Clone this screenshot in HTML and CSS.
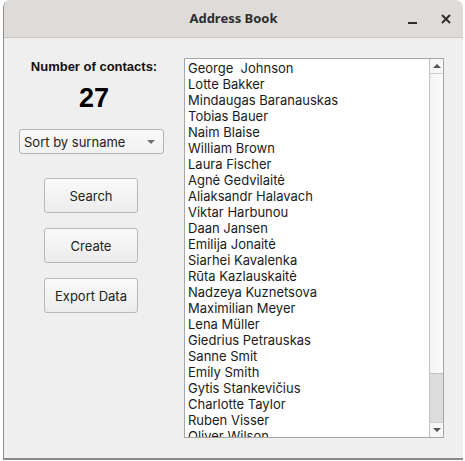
FILE: index.html
```html
<!DOCTYPE html>
<html>
<head>
<meta charset="utf-8">
<link rel="stylesheet" href="styles.css">
</head>
<body>
<div class="window">
  <div class="titlebar">
    <span class="title">Address Book</span>
    <div class="controls">
      <span class="min"></span>
      <svg class="close" width="10" height="10" viewBox="0 0 10 10"><path d="M1 1L9 9M9 1L1 9" stroke="#2e2e2e" stroke-width="2"/></svg>
    </div>
  </div>
  <div class="content">
    <div class="left">
      <div class="count-label">Number of contacts:</div>
      <div class="count">27</div>
      <div class="combo"><span>Sort by surname</span><span class="arrow"></span></div>
      <button class="btn">Search</button>
      <button class="btn">Create</button>
      <button class="btn">Export Data</button>
    </div>
    <div class="listbox">
      <div class="items">
        <div class="item">George&nbsp; Johnson</div>
        <div class="item">Lotte Bakker</div>
        <div class="item">Mindaugas Baranauskas</div>
        <div class="item">Tobias Bauer</div>
        <div class="item">Naim Blaise</div>
        <div class="item">William Brown</div>
        <div class="item">Laura Fischer</div>
        <div class="item">Agnė Gedvilaitė</div>
        <div class="item">Aliaksandr Halavach</div>
        <div class="item">Viktar Harbunou</div>
        <div class="item">Daan Jansen</div>
        <div class="item">Emilija Jonaitė</div>
        <div class="item">Siarhei Kavalenka</div>
        <div class="item">Rūta Kazlauskaitė</div>
        <div class="item">Nadzeya Kuznetsova</div>
        <div class="item">Maximilian Meyer</div>
        <div class="item">Lena Müller</div>
        <div class="item">Giedrius Petrauskas</div>
        <div class="item">Sanne Smit</div>
        <div class="item">Emily Smith</div>
        <div class="item">Gytis Stankevičius</div>
        <div class="item">Charlotte Taylor</div>
        <div class="item">Ruben Visser</div>
        <div class="item">Oliver Wilson</div>
      </div>
      <div class="scrollbar">
        <div class="sb-btn"><span class="up"></span></div>
        <div class="trough"></div>
        <div class="thumb"></div>
        <div class="sb-btn"><span class="down"></span></div>
      </div>
    </div>
  </div>
</div>
</body>
</html>
```
FILE: styles.css
```css
html, body {
  margin: 0;
  padding: 0;
  background: #ffffff;
  width: 465px;
  height: 461px;
  overflow: hidden;
}
.window {
  margin-left: 3px;
  width: 459px;
  height: 458px;
  border-left: 1px solid #8e8e8e;
  border-bottom: 2px solid #8a8a8a;
  border-top-left-radius: 8px;
  border-top-right-radius: 8px;
  background: #efefef;
  overflow: hidden;
  display: flex;
  flex-direction: column;
}
.titlebar {
  height: 37px;
  flex: none;
  background: #dedbd8;
  border-bottom: 1px solid #c9c6c2;
  position: relative;
  display: flex;
  align-items: center;
  justify-content: center;
}
.title {
  font-family: "Noto Sans", sans-serif;
  font-weight: bold;
  font-size: 13px;
  color: #2e2e2e;
  margin-top: -1px;
}
.controls {
  position: absolute;
  right: 12px;
  top: 13px;
  display: flex;
  align-items: center;
  gap: 24px;
}
.min {
  display: block;
  width: 9px;
  height: 2px;
  background: #2e2e2e;
  margin-top: 9px;
}
.close { display: block; margin-top: 1px; }
.content {
  flex: 1;
  display: flex;
  align-items: flex-start;
}
.left {
  width: 150px;
  margin-left: 15px;
  padding-top: 21px;
  display: flex;
  flex-direction: column;
  align-items: center;
}
.count-label {
  font-family: "Liberation Sans", Arial, sans-serif;
  font-weight: bold;
  font-size: 13px;
  line-height: 16px;
  color: #111;
}
.count {
  font-family: "Liberation Sans", Arial, sans-serif;
  font-weight: bold;
  font-size: 27px;
  line-height: 32px;
  margin-top: 7px;
  color: #000;
}
.combo {
  align-self: flex-start;
  margin-top: 15px;
  width: 145px;
  height: 25px;
  box-sizing: border-box;
  border: 1px solid #b3b3b3;
  border-radius: 3px;
  background: linear-gradient(#f9f9f9, #f1f1f1);
  display: flex;
  align-items: center;
  justify-content: space-between;
  padding: 0 8px 0 4px;
  font-family: Inter, sans-serif;
  font-size: 13px;
  color: #222;
}
.arrow {
  width: 0;
  height: 0;
  border-left: 4px solid transparent;
  border-right: 4px solid transparent;
  border-top: 4px solid #707070;
}
.btn {
  align-self: flex-start;
  margin-left: 25px;
  margin-top: 24px;
  width: 94px;
  height: 35px;
  border: 1px solid #b8b8b8;
  border-radius: 3px;
  background: linear-gradient(#fafafa, #ececec);
  font-family: Inter, sans-serif;
  font-size: 13px;
  color: #222;
  padding: 0;
}
.btn + .btn { margin-top: 15px; }
.listbox {
  margin-left: 15px;
  margin-top: 20px;
  width: 260px;
  height: 380px;
  box-sizing: border-box;
  border: 1px solid #a6a6a6;
  background: #ffffff;
  display: flex;
  overflow: hidden;
}
.items {
  flex: 1;
  padding: 1px 0 0 3px;
  overflow: hidden;
}
.item {
  height: 16px;
  line-height: 16px;
  font-family: Inter, sans-serif;
  font-size: 13px;
  color: #1a1a1a;
  white-space: nowrap;
}
.scrollbar {
  width: 13px;
  flex: none;
  border-left: 1px solid #c4c4c4;
  display: flex;
  flex-direction: column;
  background: linear-gradient(to right, #f3f3f3, #fbfbfb);
}
.sb-btn {
  height: 14px;
  flex: none;
  background: #f7f7f7;
  border-bottom: 1px solid #cfcfcf;
  display: flex;
  align-items: center;
  justify-content: center;
}
.sb-btn:last-child {
  border-bottom: none;
  border-top: 1px solid #cfcfcf;
}
.trough { flex: 1; }
.thumb {
  height: 48px;
  flex: none;
  background: #dcdcdc;
  border-top: 1px solid #c2c2c2;
}
.up, .down {
  width: 0;
  height: 0;
  border-left: 4px solid transparent;
  border-right: 4px solid transparent;
}
.up { border-bottom: 4px solid #555; }
.down { border-top: 4px solid #555; }
```
